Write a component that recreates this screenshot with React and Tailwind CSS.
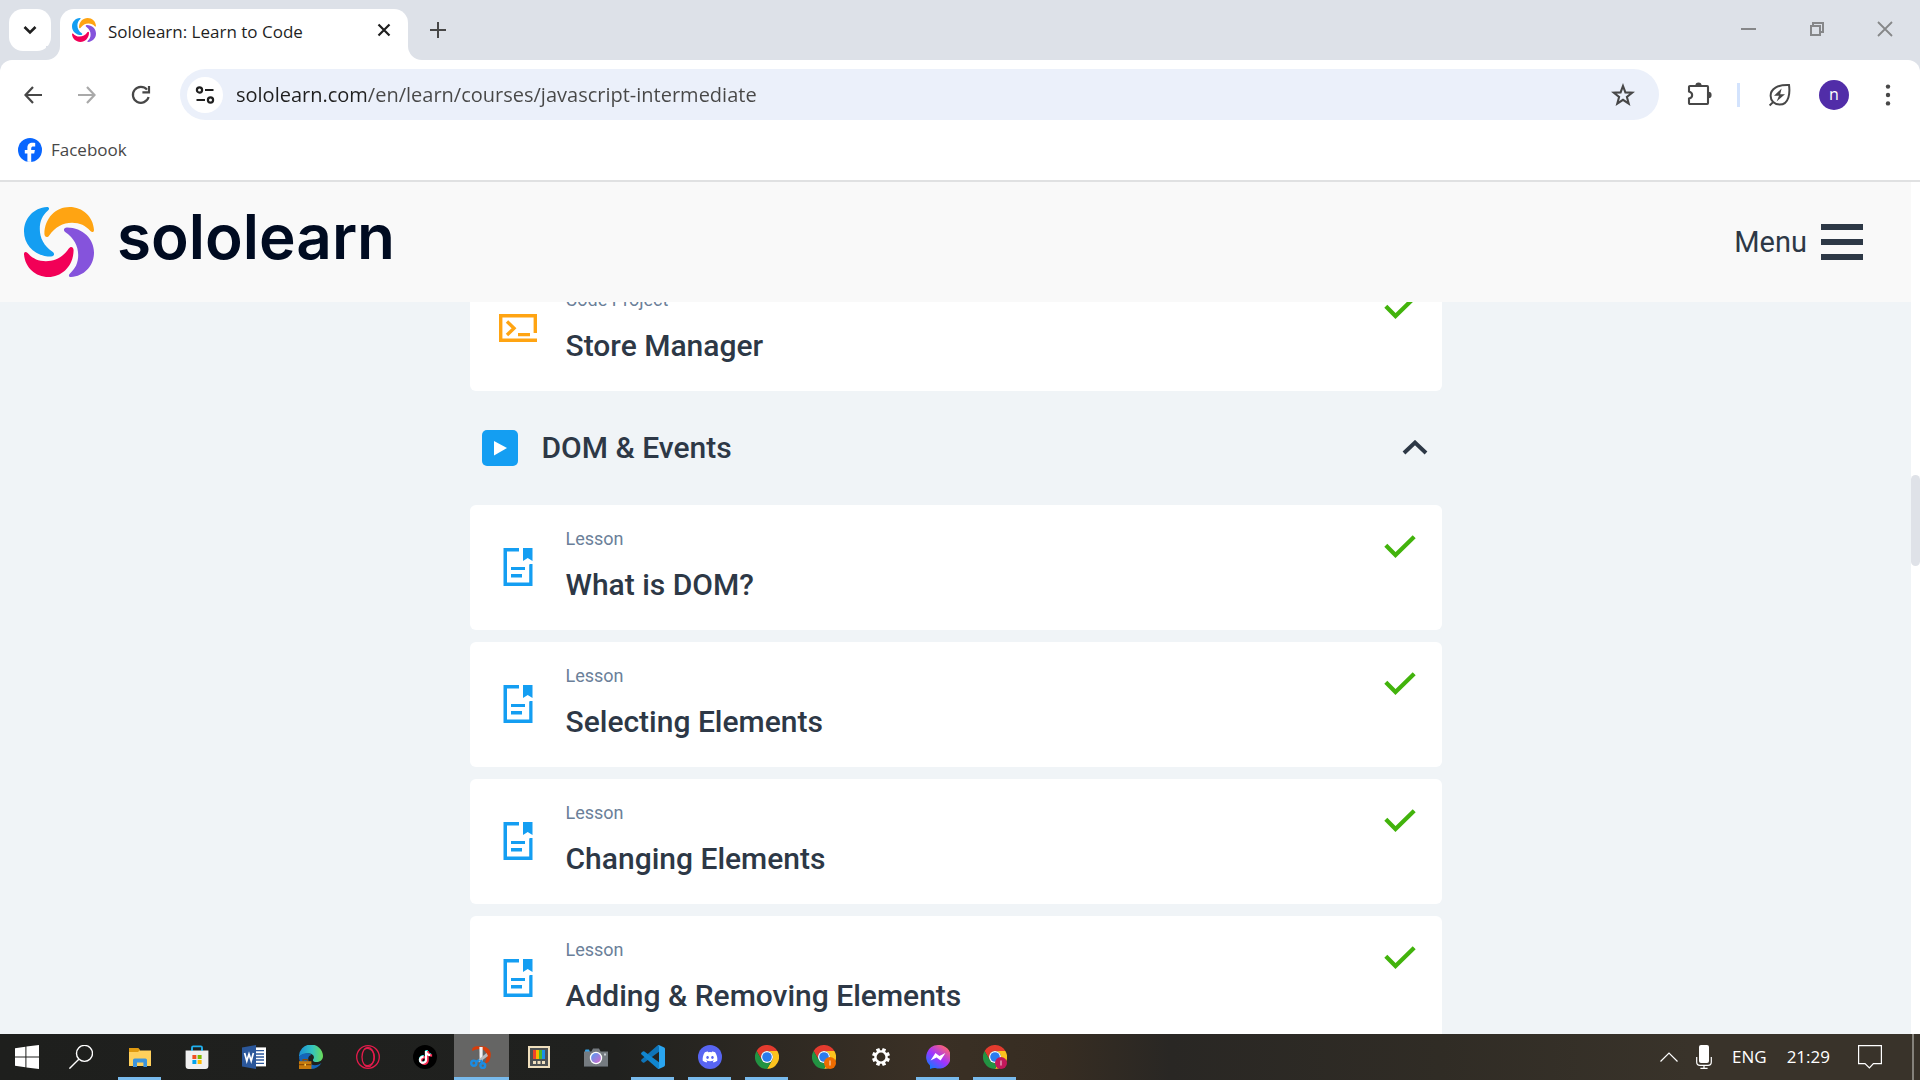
import React from "react";
import { FaDiscord, FaTiktok } from "react-icons/fa";

function SwirlLogo({ className }) {
  const petal =
    "M23 0 C9.5 0.8 0 11.5 0 24.5 C0 38 11 49.5 27 49.6 C30.5 49.4 31 46.4 28.5 44.8 C20 39 15.8 31 15.8 22 C15.8 14 18.6 8.4 24 3.6 C26 1.6 25 0 23 0 Z";
  return (
    <svg viewBox="0 0 70 70" className={className} aria-hidden="true">
      <path d={petal} fill="#149ef2" />
      <path d={petal} fill="#ffa412" transform="rotate(90 35 35)" />
      <path d={petal} fill="#8553dc" transform="rotate(180 35 35)" />
      <path d={petal} fill="#f20057" transform="rotate(270 35 35)" />
    </svg>
  );
}

function Stroke({ box = "0 0 24 24", className, width = 2, children }) {
  return (
    <svg viewBox={box} className={className} fill="none" stroke="currentColor" strokeWidth={width} aria-hidden="true">
      {children}
    </svg>
  );
}

function TabStrip() {
  return (
    <div className="flex h-[60px] items-start bg-[#dde1e8]">
      <button aria-label="Search tabs" className="mt-[9px] ml-[9px] flex size-[42px] items-center justify-center rounded-[14px] bg-white text-[#1f1f1f]">
        <Stroke className="size-[14px]" box="0 0 14 14" width={2.6}><path d="M1.5 4 L7 9.5 L12.5 4" /></Stroke>
      </button>
      <div className="relative mt-[9px] ml-[9px] flex h-[51px] w-[348px] items-center rounded-t-[14px] bg-white pr-[16px] pb-[9px] pl-3">
        <span className="absolute bottom-0 -left-[14px] size-[14px] bg-white"><span className="block size-full rounded-br-[14px] bg-[#dde1e8]" /></span>
        <span className="absolute -right-[14px] bottom-0 size-[14px] bg-white"><span className="block size-full rounded-bl-[14px] bg-[#dde1e8]" /></span>
        <SwirlLogo className="size-[24px]" />
        <span className="ml-3 flex-1 pt-[3px] whitespace-nowrap text-[17px] text-[#1f1f1f]">Sololearn: Learn to Code</span>
        <button aria-label="Close tab" className="flex size-4 items-center justify-center text-[#1f1f1f]">
          <Stroke className="size-[14px]" box="0 0 14 14" width={2.2}><path d="M1.5 1.5 L12.5 12.5 M12.5 1.5 L1.5 12.5" /></Stroke>
        </button>
      </div>
      <button aria-label="New tab" className="mt-[22px] ml-[22px] flex size-4 items-center justify-center text-[#474747]">
        <Stroke className="size-4" box="0 0 16 16" width={2}><path d="M8 0 V16 M0 8 H16" /></Stroke>
      </button>
      <div className="mt-[21px] ml-auto flex gap-[52px] pr-[27px] text-[#868789]">
        <button aria-label="Minimize"><Stroke className="size-4" box="0 0 16 16" width={2}><path d="M0 8 H15" /></Stroke></button>
        <button aria-label="Restore"><Stroke className="size-4" box="0 0 16 16" width={2}><path d="M2 5 H11 V14 H2 Z M4 5 V2 H14 V11 H11" /></Stroke></button>
        <button aria-label="Close"><Stroke className="size-4" box="0 0 16 16" width={1.8}><path d="M1 1 L15 15 M15 1 L1 15" /></Stroke></button>
      </div>
    </div>
  );
}

function Toolbar() {
  return (
    <div className="bg-[#dde1e8]">
      <div className="flex h-[69px] items-center rounded-t-[12px] bg-white pr-5 pl-6 text-[#474747]">
        <button aria-label="Back"><Stroke className="size-[18px]" box="0 0 18 18" width={2.2}><path d="M18 9 H1.8 M9 1 L1.5 9 L9 17" /></Stroke></button>
        <button aria-label="Forward" className="ml-9 text-[#a9a9a9]"><Stroke className="size-[18px]" box="0 0 18 18" width={2.2}><path d="M0 9 H16.2 M9 1 L16.5 9 L9 17" /></Stroke></button>
        <button aria-label="Reload" className="ml-[35px]"><Stroke className="size-5" box="0 0 20 20" width={2.2}><path d="M17.6 12 A8 8 0 1 1 16 4.6 M18 1 V7.4 H11.4" /></Stroke></button>
        <div className="ml-[29px] flex h-[51px] flex-1 items-center rounded-full bg-[#ebf0fa] pr-[24px] pl-[7px]">
          <button aria-label="View site information" className="flex size-9 items-center justify-center rounded-full bg-white text-[#1f1f1f]">
            <Stroke className="size-[20px]" box="0 0 20 20" width={2.2}><circle cx="4.5" cy="5" r="2.6" /><path d="M10 5 H18.5 M1.5 15 H10" /><circle cx="15.5" cy="15" r="2.6" /></Stroke>
          </button>
          <input
            aria-label="Address"
            defaultValue="sololearn.com/en/learn/courses/javascript-intermediate"
            className="ml-[13px] min-w-0 flex-1 bg-[linear-gradient(90deg,#1f1f1f_131px,#474747_131px)] bg-clip-text text-[20px] text-transparent outline-none"
          />
          <button aria-label="Bookmark this tab"><Stroke className="size-6" width={2.1}><path d="M12 3 L14.4 9.4 L21.2 9.7 L15.9 13.9 L17.7 20.6 L12 16.8 L6.3 20.6 L8.1 13.9 L2.8 9.7 L9.6 9.4 Z" /></Stroke></button>
        </div>
        <button aria-label="Extensions" className="ml-7">
          <svg viewBox="0 0 26 26" className="size-[26px]" aria-hidden="true">
            <path d="M3 4 H20.2 Q21 4 21 5 V21 Q21 22 20.2 22 H3 Q2 22 2 21 V16.6 C6.2 15.6 6.2 10.4 2 9.4 V5 Q2 4 3 4 Z" fill="none" stroke="#474747" strokeWidth="2.1" />
            <path d="M8.4 3.6 A3 3 0 0 1 14.6 3.6 Z M21.4 9.8 A3.2 3.2 0 0 1 21.4 16.2 Z" fill="#474747" />
          </svg>
        </button>
        <span className="ml-[24px] h-6 w-[3px] bg-[#d3e3fd]" />
        <button aria-label="Energy saver" className="ml-7">
          <svg viewBox="0 0 24 24" className="size-6" aria-hidden="true">
            <path d="M21 2 C22 9 21.5 21.6 11.6 21.6 C6.4 21.6 2.6 17.8 2.6 12.8 C2.6 5.6 9.6 1.6 21 2 Z M5.6 18.6 L1.6 22.4" fill="none" stroke="#474747" strokeWidth="2" />
            <path d="M13.6 5.6 L6 12.8 H11 L8.6 18.4 L17 11.2 H12.2 Z" fill="#474747" />
          </svg>
        </button>
        <button aria-label="Profile n" className="ml-[27px] flex size-[30px] items-center justify-center rounded-full bg-[#512da8] pb-[2px] text-base text-white">n</button>
        <button aria-label="Chrome menu" className="ml-[27px]">
          <svg viewBox="0 0 24 24" className="size-6" fill="#474747" aria-hidden="true"><circle cx="12" cy="3.6" r="2.2" /><circle cx="12" cy="12" r="2.2" /><circle cx="12" cy="20.4" r="2.2" /></svg>
        </button>
      </div>
      <nav className="flex h-[53px] items-center border-b-2 border-[#e0e1e2] bg-white pb-[10px] pl-[18px]">
        <a href="#facebook" className="flex items-center gap-[9px] text-[17px] text-[#474747]">
          <svg viewBox="0 0 24 24" className="size-6" aria-hidden="true">
            <circle cx="12" cy="12" r="12" fill="#0866ff" />
            <path d="M9.4 23.7 V15.6 H6.8 V12 H9.4 V10.2 C9.4 6.4 11.2 4.8 14.6 4.8 C15.6 4.8 16.6 4.9 17.2 5.1 V8.4 H15.4 C13.8 8.4 13.2 9 13.2 10.6 V12 H16.9 L16.2 15.6 H13.2 V23.9 Z" fill="#fff" />
          </svg>
          Facebook
        </a>
      </nav>
    </div>
  );
}

function SiteHeader() {
  return (
    <header className="flex h-[120px] shrink-0 items-center justify-between bg-[#f9f9f9] pr-12 pl-6">
      <a href="#home" className="flex items-center gap-[23px]">
        <SwirlLogo className="size-[70px]" />
        <span className="pb-[10px] font-[Inter] text-[62px] leading-[70px] font-semibold text-[#000b21]">sololearn</span>
      </a>
      <button className="flex items-center gap-[14px] font-[Roboto] text-[29px] text-[#2d3846]">
        <span className="pt-[2px]">Menu</span>
        <span className="flex w-[42px] flex-col gap-[9px]">
          <span className="h-[6px] bg-[#2d3846]" /><span className="h-[6px] bg-[#2d3846]" /><span className="h-[6px] bg-[#2d3846]" />
        </span>
      </button>
    </header>
  );
}

function LessonIcon() {
  return (
    <svg viewBox="0 0 30 40" className="h-10 w-[30px]" fill="#149ef2" aria-hidden="true">
      <path d="M0.5 1 H16 V4.4 H4 V35.6 H26.2 V18 Q26.2 17 27.2 17 H29.5 V39 H0.5 Z M20 1 H29.5 V14 L24.7 11 L20 14 Z M8 20 H22 V23 H8 Z M8 27 H19 V30.4 H8 Z" />
    </svg>
  );
}

function ProjectIcon() {
  return (
    <svg viewBox="0 0 40 30" className="h-[30px] w-10" fill="none" stroke="#ffa412" strokeWidth="3.4" aria-hidden="true">
      <path d="M39 27.3 H2.7 V2.7 H37.3 V20" />
      <path d="M9 8.5 L16 15.2 L9 22 M20 21.6 H32" />
    </svg>
  );
}

function CourseItem({ kind, title, children }) {
  return (
    <li>
      <a href="#item" className="flex h-[125px] rounded-[6px] bg-white pr-[26px] font-[Roboto]">
        <span className="flex w-24 items-center justify-center pb-px">{children}</span>
        <span className="flex flex-1 flex-col pt-[22px]">
          <span className="text-[18px] leading-6 text-[#6b7f99]">{kind}</span>
          <span className="mt-[14px] text-[30px] leading-10 font-medium text-[#2d3846]">{title}</span>
        </span>
        <Stroke className="mt-[30px] h-6 w-8 text-[#42b30c]" box="0 0 32 24" width={4.2}><path d="M1.8 10.2 L11.5 20 L30.2 1.8" /></Stroke>
      </a>
    </li>
  );
}

const LESSONS = ["What is DOM?", "Selecting Elements", "Changing Elements", "Adding & Removing Elements"];

function Course() {
  return (
    <main className="min-h-0 flex-1 overflow-hidden bg-[#f0f4f7]">
      <div className="mx-auto -mt-9 max-w-[972px]">
        <ul><CourseItem kind="Code Project" title="Store Manager"><ProjectIcon /></CourseItem></ul>
        <h2>
          <button className="flex h-[114px] w-full items-center pr-[14px] pl-3 text-left font-[Roboto] text-[30px] font-medium text-[#2d3846]">
            <svg viewBox="0 0 36 36" className="size-9" aria-hidden="true"><rect width="36" height="36" rx="5" fill="#149ef2" /><path d="M12 11 L25 18 L12 25.4 Z" fill="#fff" /></svg>
            <span className="ml-6 flex-1 pb-[2px]">DOM &amp; Events</span>
            <Stroke className="h-4 w-[26px]" box="0 0 26 16" width={4}><path d="M2 13 L13 2.6 L24 13" /></Stroke>
          </button>
        </h2>
        <ul className="flex flex-col gap-3">
          {LESSONS.map((t) => (
            <CourseItem key={t} kind="Lesson" title={t}><LessonIcon /></CourseItem>
          ))}
        </ul>
      </div>
    </main>
  );
}

function ChromeIcon({ badge }) {
  return (
    <svg viewBox="0 0 48 48" className="size-6" aria-hidden="true">
      <path d="M24 12 H44.8 A24 24 0 0 0 3.2 12 L13.6 30 A12 12 0 0 1 24 12 Z" fill="#e33b2e" />
      <path d="M34.4 30 L24 48 A24 24 0 0 0 44.8 12 H24 A12 12 0 0 1 34.4 30 Z" fill="#fcc31e" />
      <path d="M13.6 30 L3.2 12 A24 24 0 0 0 24 48 L34.4 30 A12 12 0 0 1 13.6 30 Z" fill="#229342" />
      <circle cx="24" cy="24" r="12" fill="#fff" />
      <circle cx="24" cy="24" r="9.6" fill="#2a7bee" />
      {badge && <circle cx="36" cy="36" r="12" fill={badge} />}
      {badge && <path d="M36 31 V41" stroke="#fff" strokeOpacity="0.65" strokeWidth="2.6" />}
    </svg>
  );
}

const APPS = [
  { name: "File Explorer", open: true, icon: (
    <svg viewBox="0 0 24 24" className="size-6"><path d="M1 3 H10 L12 5.4 H23 V21 H1 Z" fill="#ffd05c" /><path d="M1 3 H10 L12 5 L10 7 H1 Z" fill="#e09a10" /><path d="M5 22 V15 Q5 13.4 6.6 13.4 H17.4 Q19 13.4 19 15 V22 H15.4 V17.6 H9 V22 Z" fill="#3d94dc" /></svg>) },
  { name: "Microsoft Store", icon: (
    <svg viewBox="0 0 24 24" className="size-6"><path d="M7 8 V2.6 Q7 1.4 8.2 1.4 H15.8 Q17 1.4 17 2.6 V8" fill="none" stroke="#20b0ee" strokeWidth="1.8" /><path d="M0.6 5.4 H23.4 V21 Q23.4 24 20.4 24 H3.6 Q0.6 24 0.6 21 Z" fill="#f0f0f0" /><path d="M7 5.4 V3.4 M17 5.4 V3.4" stroke="#20b0ee" strokeWidth="1.8" /><path d="M7.4 10 H11.4 V14 H7.4 Z" fill="#f25022" /><path d="M12.6 10 H16.6 V14 H12.6 Z" fill="#7fba00" /><path d="M7.4 15 H11.4 V19 H7.4 Z" fill="#00a4ef" /><path d="M12.6 15 H16.6 V19 H12.6 Z" fill="#ffb900" /></svg>) },
  { name: "Word", icon: (
    <svg viewBox="0 0 24 24" className="size-6"><path d="M13 2.4 H24 V21.4 H13 Z" fill="#fff" /><path d="M14 5.6 H22 M14 9 H22 M14 12 H22 M14 15 H22 M14 18.4 H22" stroke="#2b579a" strokeWidth="1.4" /><path d="M0 2.6 L14 0 V24 L0 21.4 Z" fill="#2b579a" /><path d="M2.6 8 L4.8 16 L7 9 L9.2 16 L11.4 8" fill="none" stroke="#fff" strokeWidth="1.7" /></svg>) },
  { name: "Edge", icon: (
    <svg viewBox="0 0 24 24" className="size-6">
      <defs><linearGradient id="edge-top" x1="0" x2="1"><stop offset="0" stopColor="#1b8fd8" /><stop offset="0.55" stopColor="#33c3c0" /><stop offset="1" stopColor="#6bdc57" /></linearGradient></defs>
      <path d="M0 12 A12 12 0 0 1 24 11 C24 15.4 20.5 17 17.4 17 C14.4 17 13.2 15.6 14.4 14 C16 11.4 13.8 8.4 10 8.4 C5.4 8.4 1.4 10 0 12 Z" fill="url(#edge-top)" />
      <path d="M0 12 C2 7.6 10 7 12.6 10 C9.4 10.4 8.4 13.6 10 17 C12 20.6 17.4 21.6 22.4 18 C20 22 16 24 12 24 A12 12 0 0 1 0 12 Z" fill="#1565b8" />
      <path d="M0 16.2 H12.4 V24 H0 Z" fill="#c77a0c" /><path d="M4 16 V14.6 H8.4 V16 M0 19.6 H12.4" fill="none" stroke="#8a4b05" strokeWidth="1.1" /><path d="M5.4 18.8 H7 V20.8 H5.4 Z" fill="#ffd24a" />
    </svg>) },
  { name: "Opera GX", icon: (
    <svg viewBox="0 0 24 24" className="size-6" fill="none" stroke="#e31b4b" strokeWidth="1.3"><circle cx="12" cy="12" r="11.3" /><ellipse cx="12" cy="12" rx="6" ry="9.6" /><path d="M8.4 4.2 C12 2 18 4.6 18.4 12 C18.4 19.4 12 22 8.4 19.8" /></svg>) },
  { name: "TikTok", icon: (
    <span className="relative flex size-6 items-center justify-center rounded-full bg-black"><FaTiktok className="absolute top-[5px] left-[5px] size-[14px] text-[#25f4ee]" /><FaTiktok className="absolute top-[6px] left-[6px] size-[14px] text-[#fe2c55]" /><FaTiktok className="relative size-[13px] text-white" /></span>) },
  { name: "Snipping Tool", open: true, active: true, icon: (
    <svg viewBox="0 0 24 24" className="size-6"><path d="M2.4 6 C1 2 6 0.6 10 1.6 C17 0 22 6 20.6 11.4 C20 15 18.6 18.4 15 18 C17 13 18 8 13 4.6 C9 3.4 6 4 2.4 6 Z" fill="#d63c0a" /><path d="M9.4 2 H12.6 V17 L9.6 15 Z" fill="#f2f2f2" /><path d="M16.6 8 L18 11 L9 17.6 L7.4 15.4 Z" fill="#b9bcbe" /><g fill="none" stroke="#1b8ce3" strokeWidth="2.4"><circle cx="3.8" cy="18.2" r="2.6" /><circle cx="12.8" cy="20.6" r="2.4" /><path d="M6 17 L9.4 15 M12.4 18 L11 15" /></g></svg>) },
  { name: "PowerToys", icon: (
    <svg viewBox="0 0 24 24" className="size-6"><path d="M2 2 H22 V22 H2 Z" fill="#4e5152" stroke="#efdfbd" strokeWidth="2" /><path d="M6 5 H9 V14 H6 Z" fill="#f0402a" /><path d="M9 5 H12 V14 H9 Z" fill="#f9b600" /><path d="M12 5 H15 V14 H12 Z" fill="#49b82d" /><path d="M15 5 H18 V14 H15 Z" fill="#1a8fe8" /><path d="M6 16 H9 V19 H6 Z M10.5 16 H13.5 V19 H10.5 Z M15 16 H18 V19 H15 Z" fill="#efdfbd" /></svg>) },
  { name: "Camera", icon: (
    <svg viewBox="0 0 24 24" className="size-6"><defs><linearGradient id="lens" x1="0" y1="0" x2="1" y2="1"><stop offset="0" stopColor="#4f9df5" /><stop offset="1" stopColor="#d968c8" /></linearGradient></defs><path d="M1 7 V5.4 Q1 4.4 2 4.4 H5 L6 7 Z" fill="#35a3e8" /><path d="M0 6.4 H7.4 L9 3.4 H15 L16.6 6.4 H24 V22 H0 Z" fill="#757b80" /><path d="M0 21 H24 V22 H0 Z" fill="#4d5256" /><circle cx="12" cy="13" r="6.2" fill="#fff" /><circle cx="12" cy="13" r="4.9" fill="url(#lens)" /><path d="M20 8.4 H22 V10.4 H20 Z" fill="#c6cbd0" /></svg>) },
  { name: "Visual Studio Code", open: true, icon: (
    <svg viewBox="0 0 24 24" className="size-6"><path d="M18 6.8 L3.4 17.4 Q2.6 18 1.8 17.4 L0.4 16.2 Q-0.3 15.4 0.5 14.6 L16.4 0.6 L18 0 Z" fill="#0f74b8" /><path d="M18 17.2 L3.4 6.6 Q2.6 6 1.8 6.6 L0.4 7.8 Q-0.3 8.6 0.5 9.4 L16.4 23.4 L18 24 Z" fill="#1186cf" /><path d="M17 0.4 Q17.6 0 18.4 0.3 L23.2 2.6 Q24 3 24 4 V20 Q24 21 23.2 21.4 L18.4 23.7 Q17.6 24 17 23.6 L18 22.6 V1.4 Z" fill="#2aa5f0" /></svg>) },
  { name: "Discord", open: true, icon: (
    <span className="flex size-6 items-center justify-center rounded-full bg-[#5865f2]"><FaDiscord className="size-4 text-white" /></span>) },
  { name: "Chrome", open: true, icon: <ChromeIcon /> },
  { name: "Chrome, work profile", icon: <ChromeIcon badge="#ef6c00" /> },
  { name: "Settings", icon: (
    <svg viewBox="0 0 24 24" className="size-6"><g stroke="#fff" strokeWidth="3.6">{[22.5, 67.5, 112.5, 157.5].map((a) => <path key={a} d="M12 3 V6.6 M12 17.4 V21" transform={`rotate(${a} 12 12)`} />)}</g><circle cx="12" cy="12" r="5.6" fill="none" stroke="#fff" strokeWidth="2.4" /></svg>) },
  { name: "Messenger", open: true, icon: (
    <svg viewBox="0 0 24 24" className="size-6"><defs><linearGradient id="msg" x1="0.1" y1="0.95" x2="0.8" y2="0.05"><stop offset="0" stopColor="#0a7cff" /><stop offset="0.5" stopColor="#a033ff" /><stop offset="1" stopColor="#ff6570" /></linearGradient></defs><path d="M12 0 A11.8 11.8 0 1 1 9.4 23 Q7 22.6 4 24 V20.4 A11.8 11.8 0 0 1 12 0 Z" fill="url(#msg)" /><path d="M4.6 15.4 L9.4 8 L13.4 11 L19.4 8 L14.6 15.4 L10.6 12.4 Z" fill="#fff" /></svg>) },
  { name: "Chrome, second profile", open: true, icon: <ChromeIcon badge="#c2185b" /> },
];

function Taskbar() {
  return (
    <footer className="flex h-[46px] shrink-0 items-stretch bg-[linear-gradient(90deg,#1e1f1d_0%,#20211f_32%,#3a3025_48%,#372d22_55%,#292724_61%,#302c25_75%,#39332a_88%,#39332a_100%)] text-white">
      <button aria-label="Start" className="flex w-[54px] items-center justify-center">
        <svg viewBox="0 0 24 24" className="size-6" fill="#fff"><path d="M0 3.2 L10.4 1.8 V11.4 H0 Z M11.4 1.6 L24 0 V11.4 H11.4 Z M0 12.4 H10.4 V22.2 L0 20.8 Z M11.4 12.4 H24 V24 L11.4 22.4 Z" /></svg>
      </button>
      <button aria-label="Search" className="flex w-[57px] items-center justify-center pr-[3px]">
        <Stroke className="size-6" width={1.4}><circle cx="15.5" cy="8.4" r="8" /><path d="M9.8 14.2 L0.4 23.6" /></Stroke>
      </button>
      {APPS.map((a) => (
        <button
          key={a.name}
          aria-label={a.name}
          className={"relative mx-px flex w-[55px] items-center justify-center " + (a.active ? "bg-[#656564]" : "")}
        >
          {a.icon}
          {a.open && <span className={"absolute bottom-0 h-[3px] bg-[#78baec] " + (a.active ? "inset-x-0" : "inset-x-[6px]")} />}
        </button>
      ))}
      <div className="ml-auto flex items-center text-[17px]">
        <button aria-label="Show hidden icons"><Stroke className="h-[10px] w-[18px]" box="0 0 18 10" width={1.2}><path d="M0.5 9.5 L9 1 L17.5 9.5" /></Stroke></button>
        <button aria-label="Microphone" className="ml-[18px]">
          <svg viewBox="0 0 16 24" className="h-6 w-4"><rect x="3" y="0" width="10" height="18" rx="2" fill="#fff" /><path d="M0.7 12 V17 Q0.7 20.4 4 20.4 H12 Q15.3 20.4 15.3 17 V12 M8 20.4 V23.4 M4.4 23.4 H11.6" fill="none" stroke="#fff" strokeWidth="1.2" /></svg>
        </button>
        <button className="ml-5">ENG</button>
        <button className="ml-5">21:29</button>
        <button aria-label="Notifications" className="ml-7"><Stroke className="size-6" width={1.2}><path d="M0.6 0.6 H23.4 V18.6 H15.4 L11.4 23 L7 18.6 H0.6 Z" /></Stroke></button>
        <button aria-label="Show desktop" className="ml-[30px] h-full w-2 border-l-2 border-[#85827b]" />
      </div>
    </footer>
  );
}

export default function App() {
  return (
    <div className="flex h-screen flex-col overflow-hidden bg-white font-['Open_Sans',sans-serif]">
      <TabStrip />
      <Toolbar />
      <div className="flex min-h-0 flex-1">
        <div className="flex min-w-0 flex-1 flex-col">
          <SiteHeader />
          <Course />
        </div>
        <div className="w-[9px] bg-white pt-[293px]"><div className="h-[91px] rounded-full bg-[#dfe2e8]" /></div>
      </div>
      <Taskbar />
    </div>
  );
}
